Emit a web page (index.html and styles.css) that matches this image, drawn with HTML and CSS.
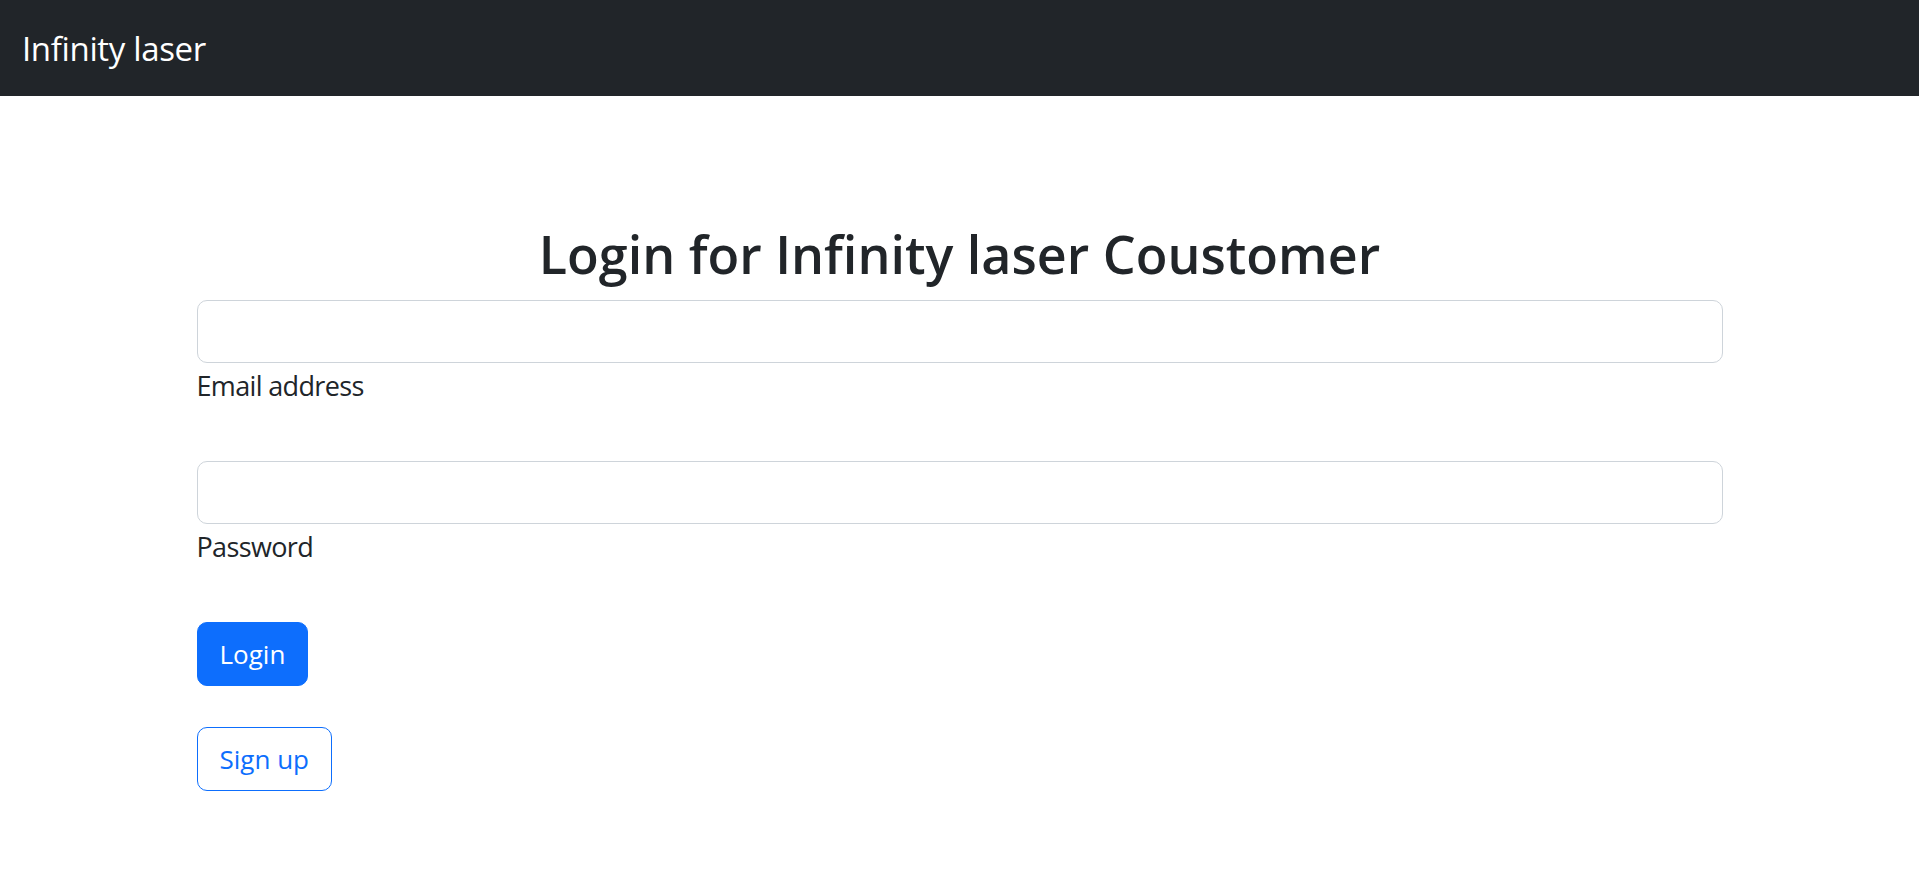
FILE: index.html
```html
<!DOCTYPE html>
<html lang="en">
<head>
<meta charset="utf-8">
<title>Infinity laser - Login</title>
<link rel="stylesheet" href="styles.css">
</head>
<body>
<nav class="navbar">
  <a class="brand" href="#">Infinity laser</a>
</nav>
<main class="container">
  <h1 class="title">Login for Infinity laser Coustomer</h1>
  <form class="form">
    <div class="field">
      <input class="input" type="email" id="email">
      <label class="label" for="email">Email address</label>
    </div>
    <div class="field">
      <input class="input" type="password" id="password">
      <label class="label" for="password">Password</label>
    </div>
    <div class="actions">
      <button type="button" class="btn btn-primary">Login</button>
      <button type="button" class="btn btn-outline">Sign up</button>
    </div>
  </form>
</main>
</body>
</html>
```

FILE: styles.css
```css
* { box-sizing: border-box; }
html, body { margin: 0; padding: 0; }
body {
  font-family: "Open Sans", "Noto Sans", sans-serif;
  color: #212529;
  background: #fff;
}
.navbar {
  height: 96px;
  background: #212529;
  display: flex;
  align-items: center;
  padding-left: 22px;
}
.brand {
  color: #fff;
  text-decoration: none;
  font-size: 33px;
  line-height: 1;
  letter-spacing: -0.35px;
}
.container {
  width: 1526px;
  margin: 0 auto;
  padding-top: 128px;
}
.title {
  margin: 0 0 16px;
  font-size: 52px;
  line-height: 60px;
  font-weight: 600;
  text-align: center;
  letter-spacing: 0;
}
.form { display: flex; flex-direction: column; }
.field {
  display: flex;
  flex-direction: column;
  margin-bottom: 55px;
}
.input {
  height: 63px;
  border: 1px solid #ced4da;
  border-radius: 10px;
  background: #fff;
  font: inherit;
  padding: 0 20px;
}
.label {
  margin-top: 3px;
  font-size: 27px;
  line-height: 40px;
  letter-spacing: -0.65px;
}
.actions {
  display: flex;
  flex-direction: column;
  align-items: flex-start;
  gap: 41px;
}
.btn {
  height: 64px;
  padding: 0 22px;
  border-radius: 10px;
  font-family: inherit;
  font-size: 26px;
  letter-spacing: 0;
  cursor: pointer;
}
.btn-primary {
  background: #0d6efd;
  border: 1px solid #0d6efd;
  color: #fff;
}
.btn-outline {
  background: #fff;
  border: 1px solid #0d6efd;
  color: #0d6efd;
}
```
